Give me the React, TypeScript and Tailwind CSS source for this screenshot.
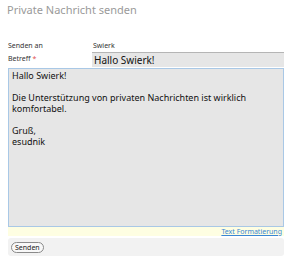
import React from "react";

export default function App() {
  const font = { fontFamily: '"Noto Sans", "DejaVu Sans", sans-serif' };
  return (
    <div className="w-[292px] h-[263px] bg-white px-2 text-[#333]" style={font}>
      <div className="pt-[3px] -ml-[1px] text-[11px] leading-[14px] text-[#9a9a9a]">
        Private Nachricht senden
      </div>
      <div className="mt-[24px] flex h-[10px] items-center text-[7px] leading-[10px]">
        <div className="w-[85px]">Senden an</div>
        <div>Swierk</div>
      </div>
      <div className="mt-[1px] flex h-[15px] items-center text-[7px]">
        <div className="w-[84px]">
          Betreff <span className="text-[#e05050]">*</span>
        </div>
        <div className="flex h-[15px] flex-1 items-center border-t border-[#b5b5b5] bg-[#e6e6e6] pl-[2px] text-[10px] text-[#111]">
          Hallo Swierk!
        </div>
      </div>
      <textarea
        className="mt-[1px] block h-[159px] w-full resize-none border border-[#a9c8e6] bg-[#e6e6e6] px-[3px] pt-[1px] text-[9px] leading-[11px] text-[#111] outline-none"
        style={font}
        defaultValue={
          "Hallo Swierk!\n\nDie Unterstützung von privaten Nachrichten ist wirklich\nkomfortabel.\n\nGruß,\nesudnik"
        }
      />
      <div className="flex h-[9px] items-center justify-end bg-[#fefee2] pr-[2px] text-[7px] leading-[9px]">
        <a href="#" className="text-[#3a86d4] underline">
          Text Formatierung
        </a>
      </div>
      <div className="mt-[2px] flex h-[18px] items-center rounded-[3px] bg-[#f2f2f2] pl-[3px]">
        <button className="flex h-[11px] items-center rounded-full border border-[#8a8a8a] bg-[#f8f8f8] px-[3px] text-[7px] leading-[9px] text-[#222]">
          Senden
        </button>
      </div>
    </div>
  );
}
